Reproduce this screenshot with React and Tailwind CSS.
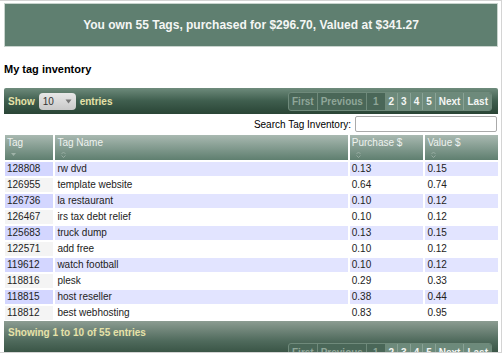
import React from "react";

const rows = [
  ["128808", "rw dvd", "0.13", "0.15"],
  ["126955", "template website", "0.64", "0.74"],
  ["126736", "la restaurant", "0.10", "0.12"],
  ["126467", "irs tax debt relief", "0.10", "0.12"],
  ["125683", "truck dump", "0.13", "0.15"],
  ["122571", "add free", "0.10", "0.12"],
  ["119612", "watch football", "0.10", "0.12"],
  ["118816", "plesk", "0.29", "0.33"],
  ["118815", "host reseller", "0.38", "0.44"],
  ["118812", "best webhosting", "0.83", "0.95"],
];

function Pager() {
  const dis = "px-[3px] h-[17px] flex items-center text-[#8fa698] border-r border-[#6f8a7b]";
  const act = "px-[3px] h-[17px] flex items-center text-[#f4f6f4] bg-[#6d8a7b] border-r border-[#8aa396]";
  return (
    <div className="flex items-stretch rounded-[3px] border border-[#6f8a7b] bg-[#4a6758] text-[10px] font-bold overflow-hidden">
      <span className={dis}>First</span>
      <span className={dis}>Previous</span>
      <span className={dis + " px-[6px]"}>1</span>
      <span className={act}>2</span>
      <span className={act}>3</span>
      <span className={act}>4</span>
      <span className={act}>5</span>
      <span className={act}>Next</span>
      <span className={act + " border-r-0"}>Last</span>
    </div>
  );
}

function SortIcon({ down }) {
  return (
    <svg width="7" height="7" viewBox="0 0 7 7" className="mt-[2px] ml-[5px]">
      {down ? (
        <path d="M1 2 L6 2 L3.5 5 Z" fill="#9fb3a8" />
      ) : (
        <g fill="none" stroke="#9fb3a8" strokeWidth="0.8">
          <path d="M1.5 3 L3.5 1 L5.5 3" />
          <path d="M1.5 4.5 L3.5 6.5 L5.5 4.5" />
        </g>
      )}
    </svg>
  );
}

export default function App() {
  return (
    <div
      className="w-[502px] h-[353px] overflow-hidden bg-white border-t border-r border-b border-[#d4d4d4]"
      style={{ fontFamily: '"Liberation Sans", Arial, sans-serif' }}
    >
      <div className="mx-[4px] mt-[2px] w-[494px] h-[44px] bg-[#5f7f70] border border-[#c9d4ce] flex items-center justify-center">
        <span className="text-[#f4f6f4] font-bold text-[12px]">
          You own 55 Tags, purchased for $296.70, Valued at $341.27
        </span>
      </div>
      <div className="mx-[4px] mt-[15px] text-[11px] font-bold text-black leading-[14px]">
        My tag inventory
      </div>
      <div className="mx-[4px] mt-[12px] w-[494px] h-[26px] rounded-t-[2px] bg-gradient-to-b from-[#6e8b7c] via-[#3f5e4e] to-[#2a4536] flex items-center justify-between pl-[4px] pr-[6px]">
        <div className="flex items-center text-[10px] font-bold text-[#e6e2a8]">
          <span>Show</span>
          <div className="ml-[4px] mr-[4px] w-[37px] h-[17px] rounded-[4px] bg-gradient-to-b from-[#e8e8e8] to-[#c8c8c8] flex items-center justify-between px-[4px] text-[#333] font-normal text-[10px]">
            <span>10</span>
            <svg width="7" height="5" viewBox="0 0 7 5">
              <path d="M0.5 0.5 L6.5 0.5 L3.5 4.5 Z" fill="#777" />
            </svg>
          </div>
          <span>entries</span>
        </div>
        <Pager />
      </div>
      <div className="mx-[4px] mt-[2px] flex justify-end items-center text-[10px] text-black h-[16px]">
        <span className="mr-[4px]">Search Tag Inventory:</span>
        <div className="w-[142px] h-[16px] border border-[#aaa] rounded-[2px] bg-white" />
      </div>
      <table
        className="mx-[3px] mt-[1px] border-separate text-[10px] text-[#222]"
        style={{ borderSpacing: "2px", width: "497px" }}
      >
        <thead>
          <tr>
            {[
              ["Tag", 48, true],
              ["Tag Name", 290, false],
              ["Purchase $", 73, false],
              ["Value $", 72, false],
            ].map(([t, w, d]) => (
              <th
                key={t}
                style={{ width: w }}
                className="h-[25px] p-0 align-top text-left font-normal text-[#eef2ef] bg-gradient-to-b from-[#a9b9b1] to-[#5f7f70]"
              >
                <div className="pl-[2px] pt-[2px] leading-[12px]">{t}</div>
                <SortIcon down={d} />
              </th>
            ))}
          </tr>
        </thead>
        <tbody>
          {rows.map((r, i) => {
            const odd = i % 2 === 0;
            const base = "p-0 pl-[2px] h-[14px] leading-[14px] ";
            return (
              <tr key={r[0]}>
                <td className={base + (odd ? "bg-[#d3d6ff]" : "bg-[#f4f4f4]")}>{r[0]}</td>
                <td className={base + (odd ? "bg-[#e2e4ff]" : "bg-white")}>{r[1]}</td>
                <td className={base + (odd ? "bg-[#e2e4ff]" : "bg-white")}>{r[2]}</td>
                <td className={base + (odd ? "bg-[#e2e4ff]" : "bg-white")}>{r[3]}</td>
              </tr>
            );
          })}
        </tbody>
      </table>
      <div className="mx-[4px] mt-[-1px] w-[494px] h-[40px] bg-gradient-to-b from-[#8c9c92] via-[#4f6a5c] to-[#2a4536] pl-[4px] pr-[6px] pt-[5px]">
        <div className="text-[10px] font-bold text-[#e6e2a8] leading-[14px]">
          Showing 1 to 10 of 55 entries
        </div>
        <div className="flex justify-end mt-[3px]">
          <Pager />
        </div>
      </div>
    </div>
  );
}
